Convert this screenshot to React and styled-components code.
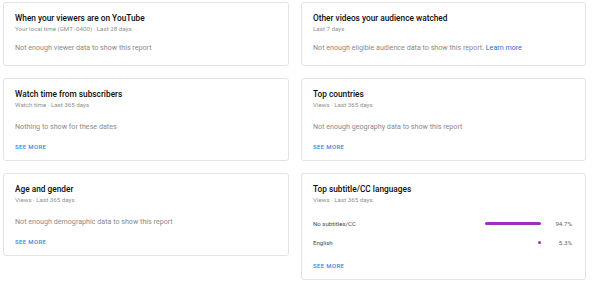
import React from "react";
import styled, { createGlobalStyle } from "styled-components";

const Global = createGlobalStyle`
  html, body { margin: 0; padding: 0; background: #ffffff; }
  body { font-family: Roboto, "Noto Sans", Arial, sans-serif; -webkit-font-smoothing: antialiased; }
`;

const Page = styled.div`
  display: flex;
  gap: 12px;
  padding: 2px 3px;
  align-items: flex-start;
`;

const Column = styled.div`
  display: flex;
  flex-direction: column;
  gap: 12px;
  width: ${(p) => p.$w}px;
`;

const Card = styled.section`
  box-sizing: border-box;
  border: 1px solid #e3e3e3;
  border-radius: 3px;
  padding: 10px 13px ${(p) => (p.$more ? 8 : 12)}px 11px;
  background: #fff;
`;

const Title = styled.h2`
  margin: 0;
  font-size: 8.3px;
  line-height: 11px;
  font-weight: 500;
  color: #0d0d0d;
`;

const Sub = styled.div`
  font-size: 6.2px;
  line-height: 11px;
  color: #8f8f8f;
`;

const Body = styled.p`
  margin: ${(p) => (p.$tight ? 8 : 11)}px 0 0;
  font-size: 7.15px;
  line-height: 10px;
  color: #8a8a8a;
`;

const Link = styled.a`
  color: #1a6fd6;
  text-decoration: none;
`;

const SeeMore = styled.a`
  display: block;
  margin-top: ${(p) => p.$mt ?? 10}px;
  font-size: 6px;
  line-height: 10px;
  font-weight: 500;
  letter-spacing: 0.35px;
  color: #3b84e0;
  text-transform: uppercase;
`;

const Rows = styled.div`
  margin-top: 8px;
  display: flex;
  flex-direction: column;
`;

const Row = styled.div`
  display: flex;
  align-items: center;
  height: 19px;
`;

const Label = styled.span`
  flex: 1;
  font-size: 6.1px;
  color: #484848;
`;

const Track = styled.div`
  width: 59px;
  height: 3px;
  display: flex;
  justify-content: flex-end;
`;

const Fill = styled.div`
  height: 100%;
  min-width: 3px;
  border-radius: 2px;
  background: #9a2fc4;
`;

const Pct = styled.span`
  width: 31px;
  text-align: right;
  font-size: 6.2px;
  color: #5e5e5e;
`;

const langs = [
  { name: "No subtitles/CC", pct: 94.7 },
  { name: "English", pct: 5.3 },
];

export default function App() {
  return (
    <>
      <Global />
      <Page>
        <Column $w={286}>
          <Card>
            <Title>When your viewers are on YouTube</Title>
            <Sub>Your local time (GMT -0400) · Last 28 days</Sub>
            <Body $tight>Not enough viewer data to show this report</Body>
          </Card>
          <Card $more>
            <Title>Watch time from subscribers</Title>
            <Sub>Watch time · Last 365 days</Sub>
            <Body>Nothing to show for these dates</Body>
            <SeeMore>See more</SeeMore>
          </Card>
          <Card $more>
            <Title>Age and gender</Title>
            <Sub>Views · Last 365 days</Sub>
            <Body>Not enough demographic data to show this report</Body>
            <SeeMore>See more</SeeMore>
          </Card>
        </Column>
        <Column $w={285}>
          <Card>
            <Title>Other videos your audience watched</Title>
            <Sub>Last 7 days</Sub>
            <Body $tight>
              Not enough eligible audience data to show this report.{" "}
              <Link>Learn more</Link>
            </Body>
          </Card>
          <Card $more>
            <Title>Top countries</Title>
            <Sub>Views · Last 365 days</Sub>
            <Body>Not enough geography data to show this report</Body>
            <SeeMore>See more</SeeMore>
          </Card>
          <Card $more>
            <Title>Top subtitle/CC languages</Title>
            <Sub>Views · Last 365 days</Sub>
            <Rows>
              {langs.map((l) => (
                <Row key={l.name}>
                  <Label>{l.name}</Label>
                  <Track>
                    <Fill style={{ width: `${l.pct}%` }} />
                  </Track>
                  <Pct>{l.pct}%</Pct>
                </Row>
              ))}
            </Rows>
            <SeeMore $mt={9}>See more</SeeMore>
          </Card>
        </Column>
      </Page>
    </>
  );
}
